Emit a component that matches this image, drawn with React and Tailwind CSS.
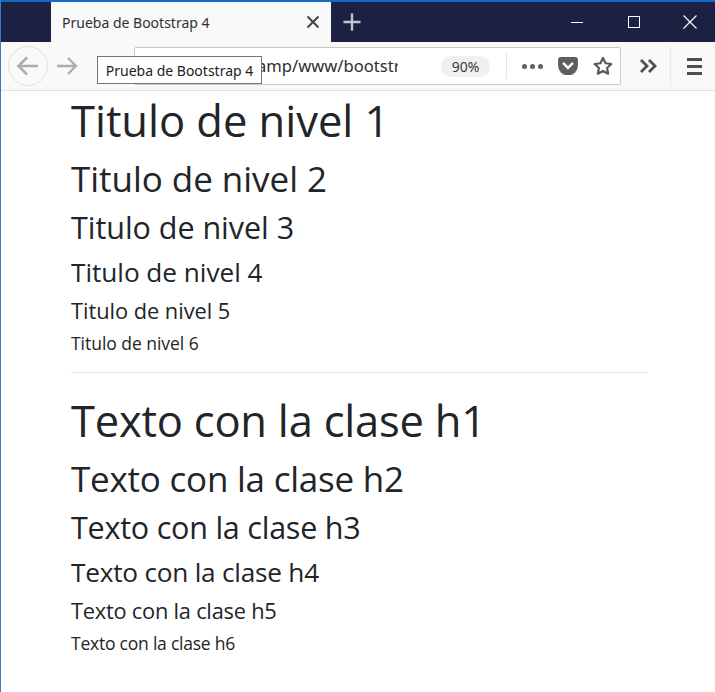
function Back() {
  return (
    <div className="w-[40px] h-[40px] rounded-full border border-[#e0e0e1] flex items-center justify-center ml-[7px] bg-[#f9f9fa]">
      <svg width="24" height="22" viewBox="0 0 24 22" fill="none" stroke="#adadb0" strokeWidth="2.6">
        <path d="M22 11H3M11 2.5L2.5 11L11 19.5" />
      </svg>
    </div>
  );
}

export default function App() {
  return (
    <div className="relative w-[715px] h-[692px] overflow-hidden bg-white border-l border-[#2f7fc4] text-[#212529]" style={{ fontFamily: '"Noto Sans",sans-serif' }}>
      <div className="h-[42px] bg-[#1c2144] border-t-[2px] border-[#0f6cc4] flex items-stretch">
        <div className="w-[50px]" />
        <div className="w-[280px] bg-[#f9f9fa] flex items-center pl-[11px] pr-[11px] justify-between">
          <span className="text-[14px] text-[#303033]">Prueba de Bootstrap 4</span>
          <svg width="14" height="14" viewBox="0 0 14 14" stroke="#46464a" strokeWidth="2" fill="none">
            <path d="M1.5 1.5L12.5 12.5M12.5 1.5L1.5 12.5" />
          </svg>
        </div>
        <div className="w-[42px] flex items-center justify-center">
          <svg width="20" height="20" viewBox="0 0 20 20" stroke="#c4c5cf" strokeWidth="2.4" fill="none">
            <path d="M10 1.5V18.5M1.5 10H18.5" />
          </svg>
        </div>
        <div className="flex-1" />
        <div className="w-[52px] flex items-center justify-center">
          <div className="w-[12px] h-px bg-white" />
        </div>
        <div className="w-[62px] flex items-center justify-center">
          <div className="w-[12px] h-[12px] border border-white" />
        </div>
        <div className="w-[50px] flex items-center justify-center">
          <svg width="14" height="14" viewBox="0 0 14 14" stroke="#fff" strokeWidth="1.1" fill="none">
            <path d="M0.5 0.5L13.5 13.5M13.5 0.5L0.5 13.5" />
          </svg>
        </div>
      </div>

      <div className="h-[49px] bg-[#f9f9fa] border-b border-[#e2e2e4] flex items-center">
        <Back />
        <div className="w-[38px] flex justify-center">
          <svg width="24" height="22" viewBox="0 0 24 22" fill="none" stroke="#adadb0" strokeWidth="2.4">
            <path d="M2 11H21M13 3L21 11L13 19" />
          </svg>
        </div>
        <div className="ml-[48px] w-[487px] h-[38px] bg-white border border-[#c8c7c0] rounded-[2px] flex items-center">
          <div className="w-[263px] pl-[122px] overflow-hidden whitespace-nowrap text-[16.6px] text-[#2d2d2f]">
            <span>amp/www/bootstrap</span>
          </div>
          <div className="ml-[43px] w-[49px] h-[21px] rounded-full bg-[#f0f0f2] text-[14px] text-[#3a3a3d] flex items-center justify-center">90%</div>
          <div className="ml-[16px] w-px h-[26px] bg-[#e4e4e6]" />
          <div className="ml-[15px] flex gap-[3px]">
            <span className="w-[5px] h-[5px] rounded-full bg-[#5f5f63]" />
            <span className="w-[5px] h-[5px] rounded-full bg-[#5f5f63]" />
            <span className="w-[5px] h-[5px] rounded-full bg-[#5f5f63]" />
          </div>
          <svg className="ml-[15px]" width="20" height="18" viewBox="0 0 21 19">
            <path d="M3 0H18A3 3 0 0 1 21 3V9A10 10 0 0 1 0 9V3A3 3 0 0 1 3 0Z" fill="#5f5f63" />
            <path d="M6 7L10.5 11.5L15 7" fill="none" stroke="#fff" strokeWidth="2.6" strokeLinecap="round" />
          </svg>
          <svg className="ml-[15px]" width="20" height="20" viewBox="0 0 21 21" fill="none" stroke="#5a5a5e" strokeWidth="2.3" strokeLinejoin="round">
            <path d="M10.5 2L13.2 7.6L19.2 8.4L14.8 12.6L15.9 18.6L10.5 15.7L5.1 18.6L6.2 12.6L1.8 8.4L7.8 7.6Z" />
          </svg>
        </div>
        <svg className="ml-[18px]" width="18" height="16" viewBox="0 0 18 16" fill="none" stroke="#4f4f53" strokeWidth="2.8">
          <path d="M2 2L8 8L2 14M10 2L16 8L10 14" />
        </svg>
        <div className="ml-[13px] w-px h-[40px] bg-[#e8e8ea]" />
        <div className="ml-[16px] flex flex-col gap-[4px]">
          <span className="w-[15px] h-[3px] bg-[#4f4f53]" />
          <span className="w-[15px] h-[3px] bg-[#4f4f53]" />
          <span className="w-[15px] h-[3px] bg-[#4f4f53]" />
        </div>
      </div>

      <div className="absolute left-[96px] top-[56px] w-[165px] h-[28px] bg-white border border-[#767676] text-[14px] text-[#222] flex items-center justify-center whitespace-nowrap">
        Prueba de Bootstrap 4
      </div>

      <main className="w-[577px] ml-[70px] pt-[3px]" style={{ fontFamily: '"Open Sans","Noto Sans",sans-serif' }}>
        <div className="flex flex-col gap-[9px] tracking-[-0.002em]">
          <h1 className="text-[43.5px] leading-[54px]">Titulo de nivel 1</h1>
          <h2 className="text-[35px] leading-[43.2px]">Titulo de nivel 2</h2>
          <h3 className="text-[30.5px] leading-[37.8px]">Titulo de nivel 3</h3>
          <h4 className="text-[26.2px] leading-[32.4px]">Titulo de nivel 4</h4>
          <h5 className="text-[21.8px] leading-[27px]">Titulo de nivel 5</h5>
          <h6 className="text-[17.5px] leading-[21.6px]">Titulo de nivel 6</h6>
        </div>
        <hr className="mt-[17px] mb-[21px] border-t border-[#e6e6e6]" />
        <div className="flex flex-col gap-[9px] tracking-[-0.014em]">
          <p className="text-[43.5px] leading-[54px]">Texto con la clase h1</p>
          <p className="text-[35px] leading-[43.2px]">Texto con la clase h2</p>
          <p className="text-[30.5px] leading-[37.8px]">Texto con la clase h3</p>
          <p className="text-[26.2px] leading-[32.4px]">Texto con la clase h4</p>
          <p className="text-[21.8px] leading-[27px]">Texto con la clase h5</p>
          <p className="text-[17.5px] leading-[21.6px]">Texto con la clase h6</p>
        </div>
      </main>
    </div>
  );
}
